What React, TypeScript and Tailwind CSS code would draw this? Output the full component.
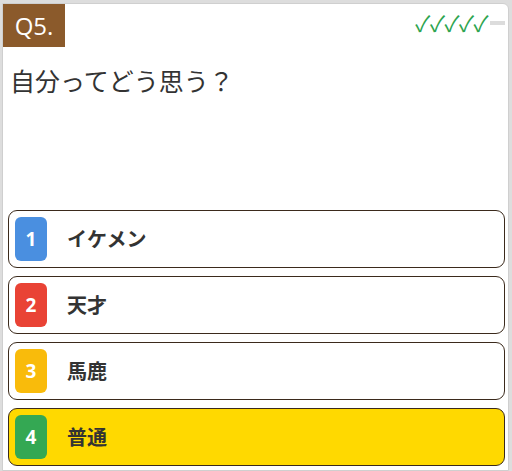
import React from "react";

const options = [
  { n: "1", label: "イケメン", badge: "bg-[#4a8fe0]", selected: false },
  { n: "2", label: "天才", badge: "bg-[#e94335]", selected: false },
  { n: "3", label: "馬鹿", badge: "bg-[#f9bb0b]", selected: false },
  { n: "4", label: "普通", badge: "bg-[#34a853]", selected: true },
];

export default function App() {
  return (
    <div
      className="w-[512px] h-[471px] bg-[#dddddd] pt-[3px] pl-[2px] pr-[3px] overflow-hidden"
      style={{ fontFamily: '"Noto Sans", "Noto Sans CJK JP", sans-serif' }}
    >
      <div className="h-[468px] bg-white border border-[#cfcfcf] rounded-tr-[6px] flex flex-col">
        <div className="flex items-start justify-between h-[43px]">
          <div className="w-[62px] h-[43px] bg-[#8b5a2b] text-white text-[24px] flex items-center justify-center leading-none" style={{ fontFamily: '"Open Sans", "Noto Sans", sans-serif' }}>
            Q5.
          </div>
          <div className="flex items-center mt-[7px] mr-[3px]">
            <span className="text-[#2ea44f] text-[22px] leading-none tracking-[-0.5px]" style={{ fontFamily: '"Noto Sans CJK JP", sans-serif' }}>✓✓✓✓✓</span>
            <span className="w-[15px] h-[4px] bg-[#dcdcdc] ml-[2px] mt-[2px]" />
          </div>
        </div>
        <div className="pl-[7px] pt-[21px] text-[25px] leading-none text-[#333333]" style={{ fontFamily: '"Noto Sans CJK JP", sans-serif' }}>
          自分ってどう思う？
        </div>
        <div className="mt-auto flex flex-col gap-[8px] pl-[5px] pr-[3px] pb-[4px]">
          {options.map((o) => (
            <div
              key={o.n}
              className={`h-[58px] rounded-[9px] border border-[#3b2a1c] flex items-center pl-[6px] ${o.selected ? "bg-[#ffd900]" : "bg-white"}`}
            >
              <div className={`w-[32px] h-[44px] rounded-[6px] ${o.badge} text-white text-[19px] font-bold flex items-center justify-center`} style={{ fontFamily: '"Noto Sans", sans-serif' }}>
                {o.n}
              </div>
              <div className="ml-[20px] text-[20px] font-bold text-[#333333]" style={{ fontFamily: '"Noto Sans CJK JP", sans-serif' }}>
                {o.label}
              </div>
            </div>
          ))}
        </div>
      </div>
    </div>
  );
}
